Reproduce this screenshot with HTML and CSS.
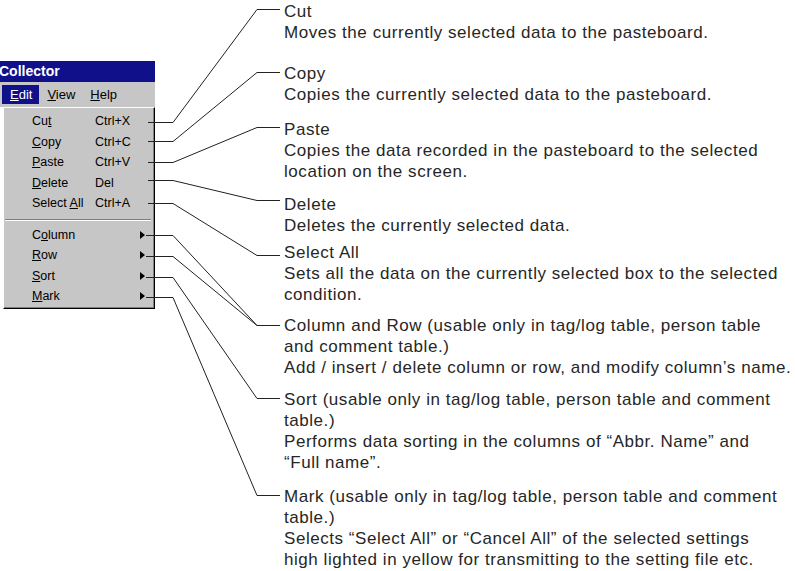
FILE: index.html
```
<!DOCTYPE html>
<html>
<head>
    <meta charset="UTF-8">
    <title>Edit menu</title>
    <link rel="stylesheet" href="styles.css">
</head>
<body>
    <div class="figure">
        <div class="window">
            <div class="titlebar">Collector</div>
            <div class="menubar">
                <span class="menubar-item active"><u>E</u>dit</span>
                <span class="menubar-item"><u>V</u>iew</span>
                <span class="menubar-item"><u>H</u>elp</span>
            </div>
            <div class="dropdown">
                <div class="item"><span class="label">Cu<u>t</u></span><span class="key">Ctrl+X</span></div>
                <div class="item"><span class="label"><u>C</u>opy</span><span class="key">Ctrl+C</span></div>
                <div class="item"><span class="label"><u>P</u>aste</span><span class="key">Ctrl+V</span></div>
                <div class="item"><span class="label"><u>D</u>elete</span><span class="key">Del</span></div>
                <div class="item"><span class="label">Select <u>A</u>ll</span><span class="key">Ctrl+A</span></div>
                <div class="separator"></div>
                <div class="item"><span class="label">C<u>o</u>lumn</span><span class="arrow"></span></div>
                <div class="item"><span class="label"><u>R</u>ow</span><span class="arrow"></span></div>
                <div class="item"><span class="label"><u>S</u>ort</span><span class="arrow"></span></div>
                <div class="item"><span class="label"><u>M</u>ark</span><span class="arrow"></span></div>
            </div>
        </div>

        <div class="notes">
            <div class="note note-cut">Cut<br>Moves the currently selected data to the pasteboard.</div>
            <div class="note note-copy">Copy<br>Copies the currently selected data to the pasteboard.</div>
            <div class="note note-paste">Paste<br>Copies the data recorded in the pasteboard to the selected<br>location on the screen.</div>
            <div class="note note-delete">Delete<br>Deletes the currently selected data.</div>
            <div class="note note-select">Select All<br>Sets all the data on the currently selected box to the selected<br>condition.</div>
            <div class="note note-column">Column and Row (usable only in tag/log table, person table<br>and comment table.)<br>Add / insert / delete column or row, and modify column’s name.</div>
            <div class="note note-sort">Sort (usable only in tag/log table, person table and comment<br>table.)<br>Performs data sorting in the columns of “Abbr. Name” and<br>“Full name”.</div>
            <div class="note note-mark">Mark (usable only in tag/log table, person table and comment<br>table.)<br>Selects “Select All” or “Cancel All” of the selected settings<br>high lighted in yellow for transmitting to the setting file etc.</div>
        </div>

        <!-- leader lines from menu items to their notes -->
        <svg class="leaders" width="795" height="571" viewBox="0 0 795 571">
            <polyline points="148,122.5 173,122.5 257,9.5 280,9.5"/>
            <polyline points="148,141.5 173,141.5 257,72.5 280,72.5"/>
            <polyline points="148,162.5 173,162.5 257,127.5 280,127.5"/>
            <polyline points="148,180.5 173,180.5 257,200.5 280,200.5"/>
            <polyline points="148,203.5 173,203.5 257,255.5 280,255.5"/>
            <polyline points="146,235.5 173,235.5 257,325.5 280,325.5"/>
            <polyline points="146,256.5 173,256.5 257,325.5"/>
            <polyline points="146,277.5 173,277.5 257,398.5 280,398.5"/>
            <polyline points="146,297.5 173,297.5 257,495.5 280,495.5"/>
        </svg>
    </div>
</body>
</html>
```

FILE: styles.css
```
body {
    margin: 0;
    padding: 0;
    background-color: #fff;
    overflow: hidden;
}
.figure {
    position: relative;
    display: flex;
    align-items: flex-start;
    width: 795px;
    height: 571px;
}
.window {
    width: 155px;
    margin-top: 61px;
    font-family: "Liberation Sans", Arial, sans-serif;
    font-size: 12.5px;
    color: #000;
}
.titlebar {
    height: 21px;
    line-height: 21px;
    background-color: #10108a;
    color: #fff;
    font-weight: bold;
    font-size: 14px;
    text-indent: -1px;
    white-space: nowrap;
}
.menubar {
    display: flex;
    align-items: center;
    height: 25px;
    padding-left: 2px;
    background-color: #c6c6c6;
    font-size: 13px;
}
.menubar-item {
    padding: 0 7px 0 8px;
    height: 19px;
    line-height: 19px;
}
.menubar-item.active {
    background-color: #10108a;
    color: #fff;
}
.dropdown {
    margin-left: 3px;
    padding: 3px 0 1px;
    background-color: #c6c6c6;
    border-top: 1px solid #fff;
    border-left: 1px solid #fff;
    border-right: 1px solid #000;
    border-bottom: 1px solid #000;
    box-shadow: inset -1px -1px 0 #808080;
}
.item {
    display: flex;
    align-items: center;
    height: 20.5px;
    padding: 0 9px 0 28px;
    white-space: nowrap;
}
.label {
    width: 63px;
}
.arrow {
    margin-left: auto;
    width: 0;
    height: 0;
    border-left: 5px solid #000;
    border-top: 4px solid transparent;
    border-bottom: 4px solid transparent;
}
.separator {
    height: 1px;
    margin: 5px 3px 4px 1px;
    background-color: #808080;
    border-bottom: 1px solid #fff;
}
.notes {
    display: flex;
    flex-direction: column;
    margin-left: 129px;
    font-family: "Liberation Sans", Arial, sans-serif;
    font-size: 17px;
    line-height: 21px;
    letter-spacing: 0.55px;
    color: #262626;
    white-space: nowrap;
}
.note-cut { margin-top: 1px; }
.note-copy { margin-top: 20px; }
.note-paste { margin-top: 14px; }
.note-delete { margin-top: 12px; }
.note-select { margin-top: 6px; }
.note-column { margin-top: 10px; }
.note-sort { margin-top: 11px; }
.note-mark { margin-top: 13px; }
.leaders {
    position: absolute;
    top: 0;
    left: 0;
    pointer-events: none;
}
.leaders polyline {
    fill: none;
    stroke: #222;
    stroke-width: 1;
}
```
